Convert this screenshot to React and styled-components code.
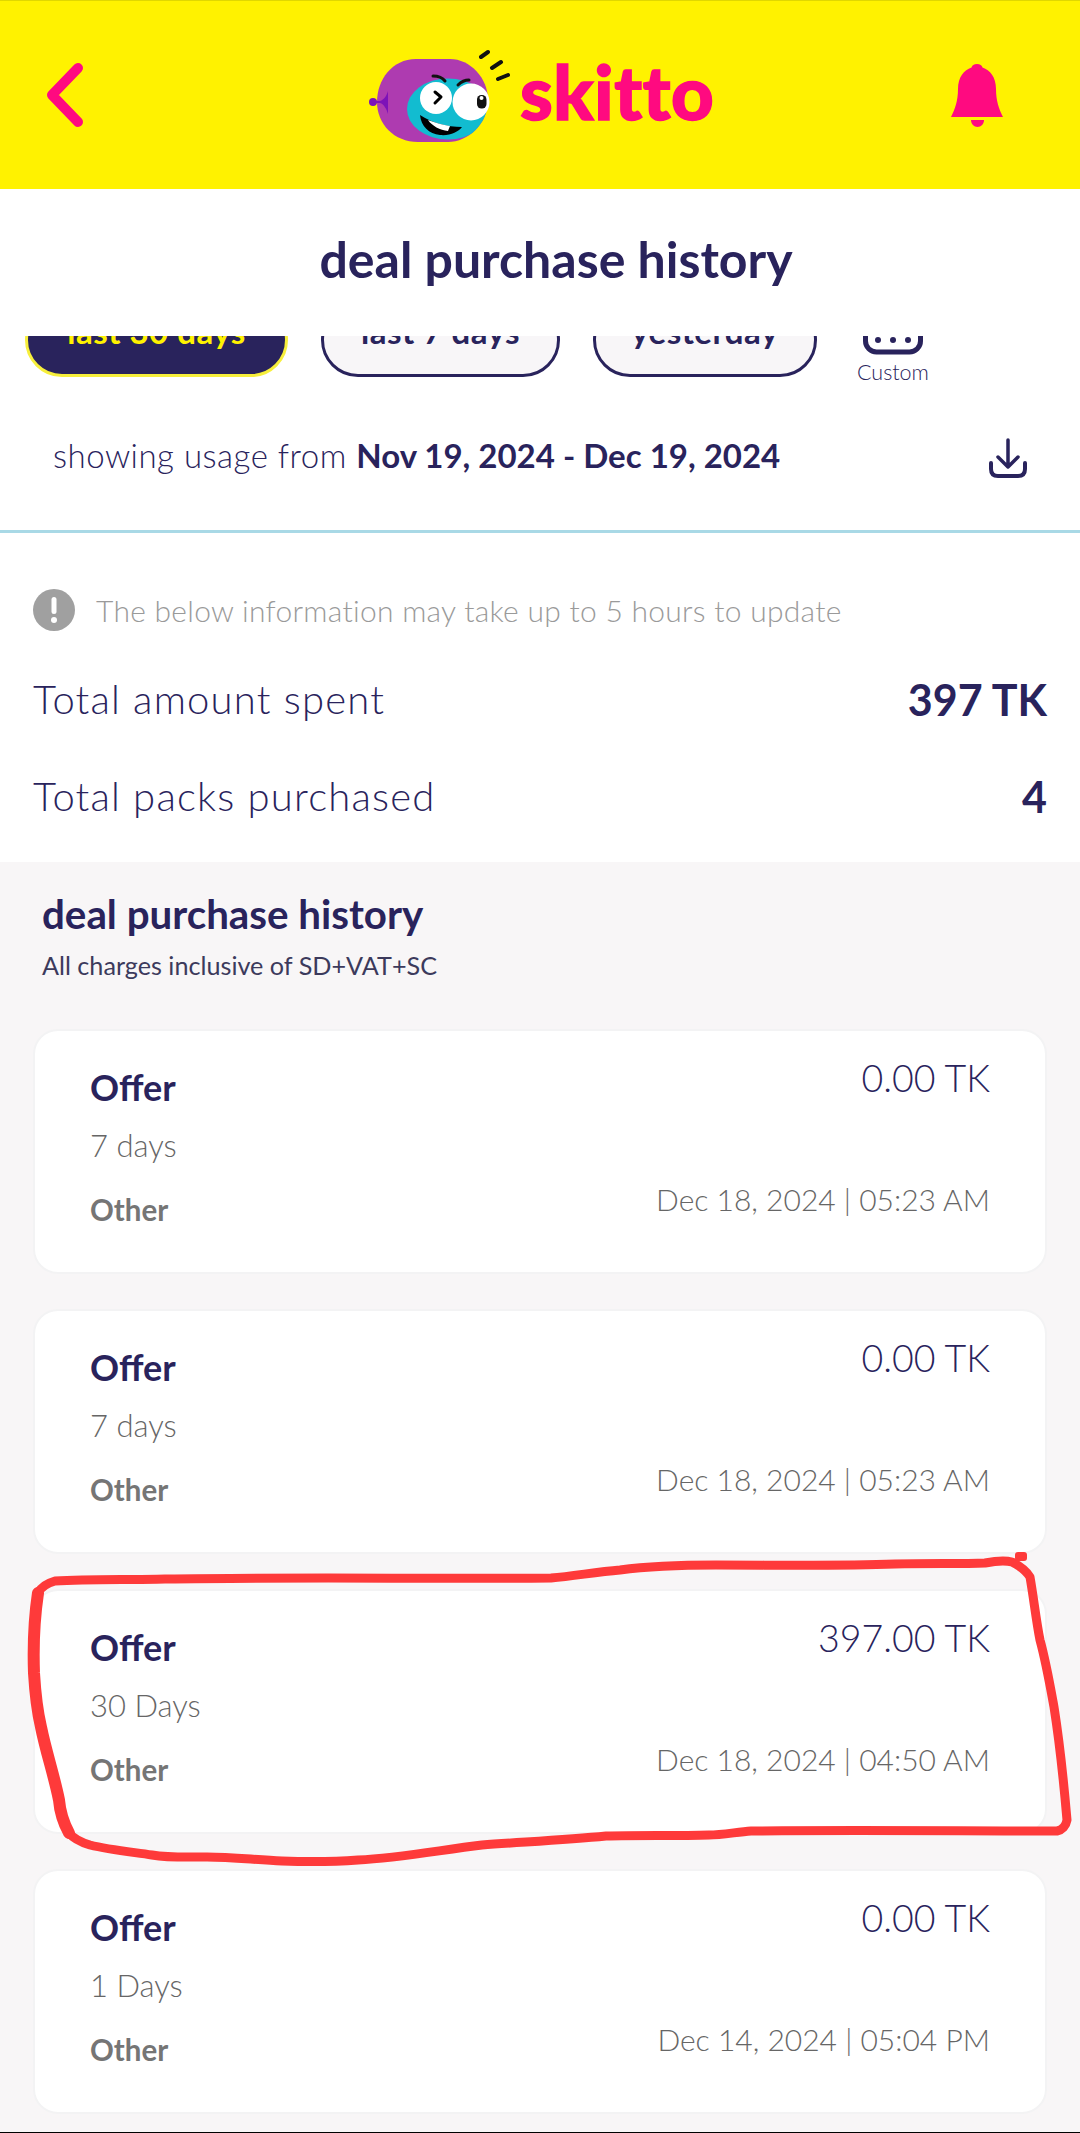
import React from 'react'
import styled, { createGlobalStyle } from 'styled-components'

const purchases = [
  { amount: '0.00 TK', validity: '7 days', date: 'Dec 18, 2024 | 05:23 AM' },
  { amount: '0.00 TK', validity: '7 days', date: 'Dec 18, 2024 | 05:23 AM' },
  { amount: '397.00 TK', validity: '30 Days', date: 'Dec 18, 2024 | 04:50 AM' },
  { amount: '0.00 TK', validity: '1 Days', date: 'Dec 14, 2024 | 05:04 PM' },
]

const bodyPath = 'M37 70C37 48 52 27 76 27H110C130 27 148 46 148 68C148 92 128 110 108 110H78C54 110 37 92 37 70Z'

const Mascot = () => (
  <svg width="175" height="130" viewBox="0 0 175 130">
    <defs>
      <clipPath id="bodyClip">
        <path d={bodyPath} />
      </clipPath>
    </defs>
    <path d={bodyPath} fill="#ae3bb0" />
    <circle cx="33" cy="70" r="4" fill="#7d12b8" />
    <path d="M34 69H40C44 68 47 63 48 59V82C47 78 44 72 40 71H34Z" fill="#7d12b8" />
    <g clipPath="url(#bodyClip)">
      <ellipse cx="108" cy="77" rx="41" ry="30.5" fill="#12bcd0" />
    </g>
    <circle cx="96" cy="66" r="16" fill="#fff" />
    <path d="M95 60L101 65L95 71" fill="none" stroke="#000" strokeWidth="3" strokeLinecap="round" strokeLinejoin="round" />
    <circle cx="131" cy="70" r="18.5" fill="#fff" />
    <rect x="137" y="63" width="9.5" height="13.5" rx="4.5" fill="#111" />
    <circle cx="141.5" cy="66" r="2" fill="#fff" />
    <path d="M93 44C98 44 102 45 105 49M118 53C121 50 125 48 129 48" fill="none" stroke="#111" strokeWidth="3" strokeLinecap="round" />
    <path d="M80 83C92 91 107 95 122 95C118 100 110 104 100 103C89 102 81 94 80 83Z" fill="#000" />
    <path d="M88 88C96 91 103 93 110 94L108 99C100 98 92 94 88 88Z" fill="#fff" />
    <path d="M141 25L148 20M152 36L161 30M158 47L168 43" stroke="#111" strokeWidth="4" strokeLinecap="round" />
  </svg>
)

const App = () => {
  return (
    <Page>
      <GlobalStyle />
      <Header>
        <BackIcon width="44" height="70" viewBox="0 0 44 70">
          <path d="M32 7L6 34L32 61" />
        </BackIcon>
        <Logo>
          <Mascot />
          <Wordmark>skitto</Wordmark>
        </Logo>
        <BellIcon width="54" height="65" viewBox="20 12 54 65">
          <path d="M47 13c3 0 5 1.500 5.500 3.500C60 19 66 26 66 38C66 50 69 58 73 66H21C25 58 28 50 28 38C28 26 34 19 41.500 16.500C42 14.500 44 13 47 13Z" />
          <path d="M41 69H54C54 73 51 76 47.500 76C44 76 41 73 41 69Z" />
        </BellIcon>
      </Header>

      <TitleBar>deal purchase history</TitleBar>

      <FilterStrip>
        <Pill $active $width={263}>last 30 days</Pill>
        <Pill $width={239}>last 7 days</Pill>
        <Pill $width={224}>yesterday</Pill>
        <CustomRange>
          <svg width="62" height="48" viewBox="0 0 62 48">
            <rect x="3.500" y="3" width="55" height="42" rx="11" fill="none" stroke="#29235c" strokeWidth="5" />
            <circle cx="16" cy="33" r="3" fill="#29235c" />
            <circle cx="31" cy="33" r="3" fill="#29235c" />
            <circle cx="46" cy="33" r="3" fill="#29235c" />
          </svg>
          <CustomLabel>Custom</CustomLabel>
        </CustomRange>
      </FilterStrip>

      <UsageRow>
        <UsageText>
          showing usage from <strong>Nov 19, 2024 - Dec 19, 2024</strong>
        </UsageText>
        <DownloadIcon width="44" height="44" viewBox="0 0 44 44">
          <path d="M20 3V30M10 20L20 30L30 20" strokeWidth="3.500" />
          <path d="M3 26V32C3 37 6 39 10 39H30C34 39 37 37 37 32V26" strokeWidth="4" />
        </DownloadIcon>
      </UsageRow>

      <Summary>
        <Note>
          <svg width="42" height="42" viewBox="0 0 42 42">
            <circle cx="21" cy="21" r="21" fill="#a0a0a0" />
            <rect x="18.500" y="8" width="5" height="17" rx="2.500" fill="#fff" />
            <circle cx="21" cy="31" r="3" fill="#fff" />
          </svg>
          <NoteText>The below information may take up to 5 hours to update</NoteText>
        </Note>
        <StatRow>
          <StatLabel>Total amount spent</StatLabel>
          <StatValue>397 TK</StatValue>
        </StatRow>
        <StatRow>
          <StatLabel>Total packs purchased</StatLabel>
          <StatValue>4</StatValue>
        </StatRow>
      </Summary>

      <History>
        <HistoryHead>
          <HistoryTitle>deal purchase history</HistoryTitle>
          <HistorySub>All charges inclusive of SD+VAT+SC</HistorySub>
        </HistoryHead>
        <CardList>
          {purchases.map((p, i) => (
            <Card key={i}>
              <CardColumn>
                <OfferName>Offer</OfferName>
                <Validity>{p.validity}</Validity>
                <Category>Other</Category>
              </CardColumn>
              <CardColumn $right>
                <Amount>{p.amount}</Amount>
                <DateText>{p.date}</DateText>
              </CardColumn>
            </Card>
          ))}
        </CardList>
      </History>

      <Scribble viewBox="0 0 1080 2133">
        <path
          d="M55 1581C90 1579 130 1580 165 1579C300 1577 430 1579 551 1578C575 1576 595 1572 620 1570C650 1566 685 1565 716 1565C780 1565 840 1566 895 1564C930 1563 960 1564 985 1563C995 1561 1005 1560 1012 1562C1020 1566 1027 1572 1030 1577C1034 1600 1036 1620 1040 1640C1046 1662 1050 1685 1054 1707C1060 1745 1064 1785 1067 1820C1066 1826 1062 1830 1057 1831C960 1831 850 1830 751 1831C737 1832 722 1835 709 1835C675 1836 640 1835 606 1836C565 1840 522 1842 482 1845C440 1850 400 1858 358 1860C332 1862 308 1862 282 1861C256 1860 232 1857 207 1857C188 1857 170 1858 152 1855C132 1852 110 1850 90 1845C80 1842 73 1838 69 1833C63 1822 60 1812 59 1800C54 1775 46 1752 41 1727C37 1710 35 1690 34 1673C33 1645 34 1620 38 1593C41 1587 48 1583 55 1581Z"
          fill="none"
          stroke="#fe3a3a"
          strokeWidth="9"
          strokeLinejoin="round"
        />
        <path
          d="M38 1593C34 1620 33 1645 34 1673C35 1690 37 1710 41 1727C46 1752 54 1775 59 1800C60 1812 63 1822 69 1833"
          fill="none"
          stroke="#fe3a3a"
          strokeWidth="12"
          strokeLinecap="round"
        />
        <rect x="1015" y="1552" width="12" height="9" rx="3" fill="#fe3a3a" />
      </Scribble>
    </Page>
  )
}

export default App

const GlobalStyle = createGlobalStyle`
  html, body {
    margin: 0;
    padding: 0;
    background: #fff;
  }
  * {
    box-sizing: border-box;
  }
`

const Page = styled.div`
  position: relative;
  width: 1080px;
  height: 2133px;
  overflow: hidden;
  background: #fff;
  color: #29235c;
  font-family: Lato, "Noto Sans", sans-serif;
  border-bottom: 1px solid #000;
`

const Header = styled.div`
  height: 189px;
  display: flex;
  align-items: center;
  padding-right: 76px;
  background: #fff200;
  border-top: 1px solid #e0d700;
`

const BackIcon = styled.svg`
  margin-left: 46px;
  margin-top: 2px;
  flex: none;
  fill: none;
  stroke: #ff0a80;
  stroke-width: 10;
  stroke-linecap: round;
  stroke-linejoin: round;
`

const Logo = styled.div`
  display: flex;
  align-items: center;
  margin-left: 250px;
  margin-top: 4px;
`

const Wordmark = styled.span`
  font-weight: 900;
  font-size: 74px;
  line-height: 1;
  letter-spacing: 0.6px;
  color: #ff0a80;
  -webkit-text-stroke: 1.5px #ff0a80;
  margin-left: 5px;
  margin-top: -10px;
`

const BellIcon = styled.svg`
  margin-left: auto;
  margin-top: 0;
  fill: #ff0a80;
`

const TitleBar = styled.h1`
  height: 147px;
  margin: 0;
  padding: 0 0 52px 32px;
  display: flex;
  align-items: flex-end;
  justify-content: center;
  font-size: 50px;
  font-weight: 700;
  line-height: 50px;
`

const FilterStrip = styled.div`
  height: 56px;
  display: flex;
  align-items: flex-end;
  gap: 33px;
  padding: 0 0 15px 25px;
  overflow: hidden;
`

const Pill = styled.div`
  flex: none;
  width: ${(p) => p.$width}px;
  height: 74px;
  display: flex;
  align-items: center;
  justify-content: center;
  padding-bottom: 18px;
  border-radius: 38px;
  border: 3px solid ${(p) => (p.$active ? '#f7ef3c' : '#29235c')};
  background: ${(p) => (p.$active ? '#29235c' : '#f8f6f8')};
  color: ${(p) => (p.$active ? '#fff200' : '#29235c')};
  font-size: 33px;
  font-weight: 700;
  letter-spacing: 0.5px;
`

const CustomRange = styled.div`
  display: flex;
  flex-direction: column;
  align-items: center;
  margin-left: 7px;
  margin-bottom: -9px;
  gap: 3px;
`

const CustomLabel = styled.span`
  font-size: 21.500px;
  font-weight: 300;
  line-height: 28px;
  color: #29235c;
`

const UsageRow = styled.div`
  height: 141px;
  display: flex;
  align-items: center;
  justify-content: space-between;
  padding: 0 48px 13px 53px;
  border-bottom: 3px solid #a9d9e6;
`

const UsageText = styled.div`
  font-size: 33px;
  font-weight: 300;
  letter-spacing: 0.5px;

  strong {
    font-weight: 700;
    letter-spacing: 0;
  }
`

const DownloadIcon = styled.svg`
  margin-top: 9px;
  fill: none;
  stroke: #29235c;
  stroke-linecap: round;
  stroke-linejoin: round;
`

const Summary = styled.div`
  height: 329px;
  padding: 56px 33px 0;
`

const Note = styled.div`
  display: flex;
  align-items: center;
  gap: 21px;
  margin-bottom: 38px;
`

const NoteText = styled.span`
  font-size: 30px;
  font-weight: 300;
  letter-spacing: 0.28px;
  color: #9a9a9a;
`

const StatRow = styled.div`
  height: 60px;
  display: flex;
  align-items: center;
  justify-content: space-between;
  margin-bottom: 37px;
`

const StatLabel = styled.span`
  font-size: 40px;
  font-weight: 300;
  letter-spacing: 1.200px;
`

const StatValue = styled.span`
  font-size: 43px;
  font-weight: 700;
`

const History = styled.div`
  height: 1271px;
  background: #f8f6f7;
`

const HistoryHead = styled.div`
  height: 167px;
  padding: 29px 42px 0;
`

const HistoryTitle = styled.div`
  font-size: 40.300px;
  font-weight: 700;
  line-height: 46px;
`

const HistorySub = styled.div`
  margin-top: 12px;
  font-size: 25.200px;
  font-weight: 400;
  line-height: 32px;
  color: #3c3a5c;
`

const CardList = styled.div`
  display: flex;
  flex-direction: column;
  gap: 35px;
  padding: 0 33px;
`

const Card = styled.div`
  height: 245px;
  display: flex;
  justify-content: space-between;
  padding: 0 55px;
  background: #fff;
  border: 2px solid #f3f3f4;
  border-radius: 25px;
`

const CardColumn = styled.div`
  display: flex;
  flex-direction: column;
  align-items: ${(p) => (p.$right ? 'flex-end' : 'flex-start')};
  padding-top: ${(p) => (p.$right ? '27px' : '36px')};
`

const OfferName = styled.div`
  font-size: 36px;
  font-weight: 700;
  line-height: 40px;
`

const Validity = styled.div`
  margin-top: 18px;
  font-size: 31px;
  font-weight: 300;
  line-height: 40px;
  color: #666;
`

const Category = styled.div`
  margin-top: 25px;
  font-size: 29.500px;
  font-weight: 700;
  line-height: 40px;
  color: #757575;
`

const Amount = styled.div`
  font-size: 37.500px;
  font-weight: 300;
  line-height: 40px;
`

const DateText = styled.div`
  margin-top: 81px;
  font-size: 30px;
  font-weight: 300;
  line-height: 40px;
  color: #666;
`

const Scribble = styled.svg`
  position: absolute;
  left: 0;
  top: 0;
  width: 1080px;
  height: 2133px;
  pointer-events: none;
`
